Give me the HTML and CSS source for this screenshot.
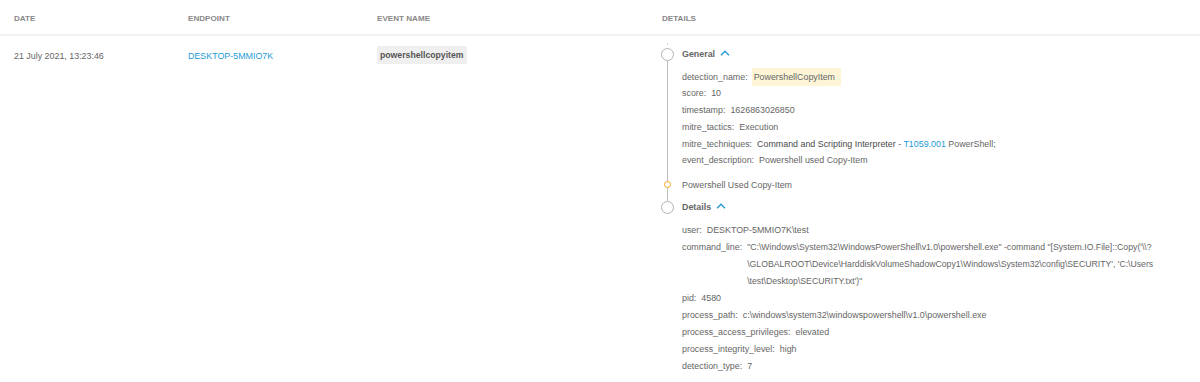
FILE: index.html
```html
<!doctype html>
<html lang="en">
<head>
	<meta charset="UTF-8">
	<title>Detections</title>
	<link rel="stylesheet" href="styles.css">
</head>
<body>
	<div class="grid">
		<div class="head">
			<div>Date</div>
			<div>Endpoint</div>
			<div>Event Name</div>
			<div>Details</div>
		</div>
		<div class="row">
			<div class="cell">21 July 2021, 13:23:46</div>
			<div class="cell"><a class="link" href="#">DESKTOP-5MMIO7K</a></div>
			<div class="cell-badge"><span class="badge">powershellcopyitem</span></div>
			<div class="cell-details">
				<div class="tl">
					<div class="tl-group has-line">
						<div class="tl-head">
							<span class="dot"></span>
							<span class="tl-title">General</span>
							<svg class="chev" width="10" height="6" viewBox="0 0 10 6"><polyline points="1,5.2 5,1.2 9,5.2" fill="none" stroke="#249bd6" stroke-width="1.4"/></svg>
						</div>
						<ul class="kv kv-tight">
							<li><span class="k">detection_name:</span><span class="mark">PowershellCopyItem</span></li>
							<li><span class="k">score:</span><span class="v">10</span></li>
							<li><span class="k">timestamp:</span><span class="v">1626863026850</span></li>
							<li><span class="k">mitre_tactics:</span><span class="v">Execution</span></li>
							<li><span class="k">mitre_techniques:</span><span class="v"><span class="strong">Command and Scripting Interpreter</span> - <a class="link" href="#">T1059.001</a> PowerShell;</span></li>
							<li><span class="k">event_description:</span><span class="v">Powershell used Copy-Item</span></li>
						</ul>
						<div class="tl-event"><span class="dot-sm"></span>Powershell Used Copy-Item</div>
					</div>
					<div class="tl-group">
						<div class="tl-head">
							<span class="dot"></span>
							<span class="tl-title">Details</span>
							<svg class="chev" width="10" height="6" viewBox="0 0 10 6"><polyline points="1,5.2 5,1.2 9,5.2" fill="none" stroke="#249bd6" stroke-width="1.4"/></svg>
						</div>
						<ul class="kv">
							<li><span class="k">user:</span><span class="v">DESKTOP-5MMIO7K\test</span></li>
							<li class="kv-block"><span class="k">command_line:</span><span class="v cmd">"C:\Windows\System32\WindowsPowerShell\v1.0\powershell.exe" -command "[System.IO.File]::Copy('\\?<br>\GLOBALROOT\Device\HarddiskVolumeShadowCopy1\Windows\System32\config\SECURITY', 'C:\Users<br>\test\Desktop\SECURITY.txt')"</span></li>
							<li><span class="k">pid:</span><span class="v">4580</span></li>
							<li><span class="k">process_path:</span><span class="v">c:\windows\system32\windowspowershell\v1.0\powershell.exe</span></li>
							<li><span class="k">process_access_privileges:</span><span class="v">elevated</span></li>
							<li><span class="k">process_integrity_level:</span><span class="v">high</span></li>
							<li><span class="k">detection_type:</span><span class="v">7</span></li>
						</ul>
					</div>
				</div>
			</div>
		</div>
	</div>
</body>
</html>
```

FILE: styles.css
```css
body, div, ul, li{
	margin: 0;
	padding: 0;
}
body{
	font-family: 'Liberation Sans', Arial, sans-serif;
	font-size: 8.9px;
	color: #666;
	background: #fff;
}
ul{
	list-style: none;
}
.head, .row{
	display: grid;
	grid-template-columns: 174px 189px 285px 1fr;
	padding-left: 14px;
}
.head{
	height: 36px;
	box-sizing: border-box;
	padding-top: 2px;
	align-items: center;
	border-bottom: 2px solid #f2f2f2;
	font-size: 8.1px;
	font-weight: bold;
	text-transform: uppercase;
	color: #888;
}
.cell{
	padding-top: 11.5px;
	line-height: 17px;
}
.link{
	color: #249bd6;
	text-decoration: none;
}
.cell-badge{
	padding-top: 10px;
}
.badge{
	display: inline-block;
	line-height: 18px;
	padding: 0 3px;
	background: #efefef;
	font-size: 8.7px;
	font-weight: bold;
	color: #555;
}
.cell-details{
	padding-top: 10px;
	padding-bottom: 8px;
}
.tl{
	margin-left: -1px;
}
.tl-group{
	position: relative;
}
.tl-group + .tl-group{
	margin-top: 6.5px;
}
.has-line::before{
	content: '';
	position: absolute;
	left: 6px;
	top: 14.5px;
	bottom: -8px;
	width: 1px;
	background: #bdbdbd;
}
.has-line::after{
	content: '';
	position: absolute;
	left: 6px;
	top: -3px;
	width: 1px;
	height: 1.5px;
	background: #d5d5d5;
}
.tl-head{
	display: flex;
	align-items: center;
	height: 16px;
}
.dot{
	width: 13px;
	height: 13px;
	box-sizing: border-box;
	border: 1.5px solid #b3b3b3;
	border-radius: 50%;
	background: #fff;
	margin-right: 8px;
	position: relative;
	z-index: 1;
}
.tl-title{
	font-weight: bold;
	color: #666;
}
.chev{
	margin-left: 5px;
	margin-top: -2px;
}
.kv{
	padding-left: 21px;
	margin-top: 7px;
}
.kv li{
	line-height: 17px;
	white-space: nowrap;
}
.kv-tight{
	margin-top: 6.5px;
}
.kv-tight li{
	line-height: 16.8px;
}
.k{
	color: #666;
}
.v{
	margin-left: 5px;
}
.strong{
	color: #4a4a4a;
}
.mark{
	margin-left: 4px;
	padding: 4px 6px 4px 2px;
	background: #fdf5d6;
}
.kv-block{
	display: flex;
}
.cmd{
	font-size: 8.7px;
}
.tl-event{
	display: flex;
	align-items: center;
	height: 16px;
	margin-top: 7.7px;
}
.dot-sm{
	width: 7px;
	height: 7px;
	box-sizing: border-box;
	border: 1.5px solid #f5a623;
	border-radius: 50%;
	background: #fff;
	margin-left: 3px;
	margin-right: 11px;
	position: relative;
	z-index: 1;
}
```
